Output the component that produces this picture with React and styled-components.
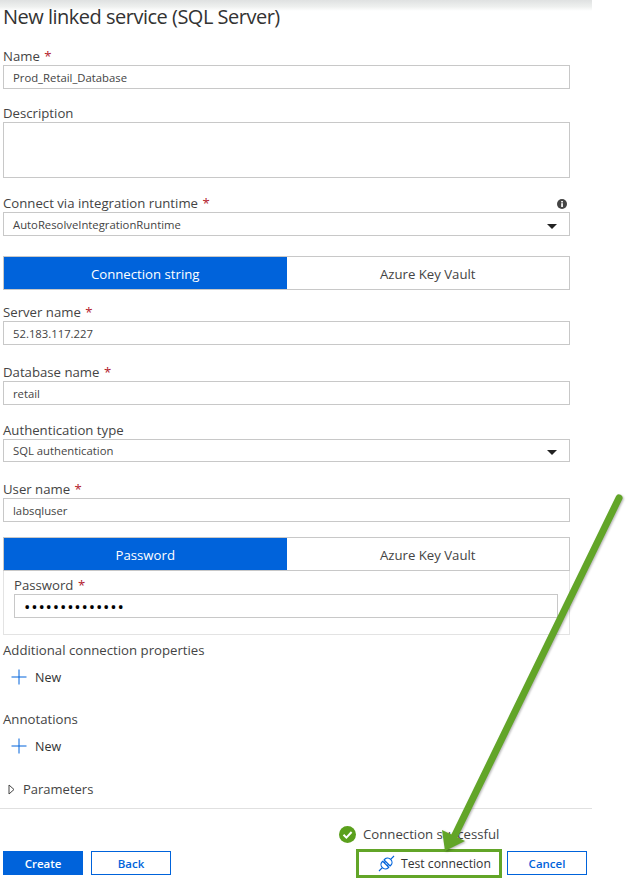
import React from 'react';
import styled, { createGlobalStyle } from 'styled-components';

const Global = createGlobalStyle`
  html, body { margin: 0; padding: 0; background: #fff; }
  * { box-sizing: border-box; }
`;
const Page = styled.div`
  position: relative; width: 637px; height: 881px; overflow: hidden;
  font-family: "Open Sans", "Liberation Sans", sans-serif; color: #444;
`;
const Panel = styled.div`
  width: 592px; height: 881px; padding: 0 22px 0 3px;
  background: linear-gradient(#dfe1e1, #eef0ef 60%, #fff) no-repeat top / 100% 11px;
`;
const Title = styled.h1`
  margin: 0; height: 48px; padding-top: 3px; font-size: 20px; letter-spacing: -0.5px; line-height: 28px; font-weight: 400; color: #333;
`;
const Field = styled.div` margin-top: ${p => p.$gap || 0}px; `;
const Label = styled.label`
  display: block; height: 17px; font-size: 13.2px; line-height: 17px; color: #444; white-space: nowrap;
`;
const Req = styled.span` color: #b3202c; margin-left: 1px; `;
const Input = styled.div`
  height: ${p => p.$h || 24}px; border: 1px solid #c8c8c8; padding: 0 9px; font-size: 11.3px; line-height: 23px; color: #444; background: #fff;
`;
const Select = styled(Input)`
  display: flex; justify-content: space-between; align-items: center; padding-right: 12px;
`;
const Caret = styled.span`
  width: 0; height: 0; border: 5px solid transparent; border-top: 5px solid #222; border-bottom: 0; margin-top: 4px;
`;
const LabelRow = styled.div` display: flex; justify-content: space-between; align-items: center; padding-right: 3px; `;
const Tabs = styled.div`
  display: grid; grid-template-columns: 1fr 1fr; height: 34px; margin-top: ${p => p.$gap}px; border: 1px solid #c8c8c8;
`;
const Tab = styled.div`
  display: flex; align-items: center; justify-content: center; font-size: 13.2px; padding-top: 1px;
  background: ${p => p.$active ? '#0063db' : '#fff'}; color: ${p => p.$active ? '#fff' : '#444'};
`;
const TabPanel = styled.div`
  height: 64px; border: 1px solid #e3e3e3; border-top: 0; padding: 6px 11px 0 10px;
`;
const Dots = styled(Input)` font-size: 17px; letter-spacing: 0.8px; color: #000; padding-left: 9px; `;
const AddRow = styled.div`
  display: flex; align-items: center; gap: 8px; height: 20px; margin-top: ${p => p.$gap}px; padding-left: 8px; font-size: 12.5px; color: #333;
`;
const Expander = styled.div`
  display: flex; align-items: center; gap: 8px; height: 18px; margin-top: ${p => p.$gap}px; padding-left: 5px; font-size: 13px;
`;
const Divider = styled.div` height: 1px; background: #e0e0e0; margin: 10px -22px 0 -3px; `;
const Status = styled.div`
  display: flex; align-items: center; gap: 7px; height: 18px; margin: 16px 0 0 336px; font-size: 13.2px;
`;
const Footer = styled.div` display: flex; align-items: flex-start; height: 29px; margin: 6px -17px 0 0; `;
const Btn = styled.div`
  width: 80px; height: 24px; display: flex; align-items: center; justify-content: center; font-size: 11.5px; font-weight: 600; margin-top: 2px;
  background: ${p => p.$primary ? '#0063db' : '#fff'}; color: ${p => p.$primary ? '#fff' : '#0063db'};
  border: 1px solid #0063db; margin-left: ${p => p.$ml || 0}px;
`;
const TestBtn = styled.div`
  width: 146px; height: 29px; display: flex; align-items: center; gap: 6px; padding-left: 19px; margin: 0 5px 0 185px;
  border: 3px solid #62a528; font-size: 12.2px; color: #333; white-space: nowrap; background: #fff;
`;
const Overlay = styled.svg` position: absolute; left: 0; top: 0; pointer-events: none; filter: drop-shadow(1px 1px 1px rgba(0,0,0,.3)); `;

const Plus = () => (
  <svg width="16" height="16" viewBox="0 0 16 16"><path d="M8 0.5V15.5M0.5 8H15.5" stroke="#0063db" strokeWidth="1" fill="none"/></svg>
);

const Req1 = () => <Req>*</Req>;

export default function App() {
  return (
    <Page>
      <Global />
      <Panel>
        <Title>New linked service (SQL Server)</Title>
        <Field>
          <Label>Name <Req1 /></Label>
          <Input>Prod_Retail_Database</Input>
        </Field>
        <Field $gap={16}>
          <Label>Description</Label>
          <Input $h={56} />
        </Field>
        <Field $gap={17}>
          <LabelRow>
            <Label>Connect via integration runtime <Req1 /></Label>
            <svg width="10" height="10" viewBox="0 0 10 10"><circle cx="5" cy="5" r="5" fill="#444"/><rect x="4.2" y="4.2" width="1.7" height="3.8" fill="#fff"/><rect x="4.2" y="2" width="1.7" height="1.5" fill="#fff"/></svg>
          </LabelRow>
          <Select>AutoResolveIntegrationRuntime<Caret /></Select>
        </Field>
        <Tabs $gap={20}>
          <Tab $active>Connection string</Tab>
          <Tab>Azure Key Vault</Tab>
        </Tabs>
        <Field $gap={14}>
          <Label>Server name <Req1 /></Label>
          <Input>52.183.117.227</Input>
        </Field>
        <Field $gap={19}>
          <Label>Database name <Req1 /></Label>
          <Input>retail</Input>
        </Field>
        <Field $gap={17}>
          <Label>Authentication type</Label>
          <Select $h={23}>SQL authentication<Caret /></Select>
        </Field>
        <Field $gap={19}>
          <Label>User name <Req1 /></Label>
          <Input>labsqluser</Input>
        </Field>
        <Tabs $gap={15}>
          <Tab $active>Password</Tab>
          <Tab>Azure Key Vault</Tab>
        </Tabs>
        <TabPanel>
          <Label>Password <Req1 /></Label>
          <Dots>••••••••••••••</Dots>
        </TabPanel>
        <Field $gap={7}>
          <Label>Additional connection properties</Label>
        </Field>
        <AddRow $gap={8}><Plus />New</AddRow>
        <Field $gap={24}>
          <Label>Annotations</Label>
        </Field>
        <AddRow $gap={8}><Plus />New</AddRow>
        <Expander $gap={24}>
          <svg width="7" height="11" viewBox="0 0 7 11"><path d="M1 1L6 5.5L1 10Z" stroke="#444" fill="none"/></svg>
          Parameters
        </Expander>
        <Divider />
        <Status>
          <svg width="17" height="17" viewBox="0 0 17 17"><circle cx="8.5" cy="8.5" r="8.5" fill="#5ba01d"/><path d="M4.5 8.8L7.4 11.6L12.6 6" stroke="#fff" strokeWidth="2" fill="none"/></svg>
          Connection successful
        </Status>
        <Footer>
          <Btn $primary>Create</Btn>
          <Btn $ml={8}>Back</Btn>
          <TestBtn>
            <svg width="17" height="17" viewBox="0 0 16 16" fill="none" stroke="#0063db" strokeWidth="1.1">
              <g transform="rotate(45 8 8)">
                <path d="M8 2.5V-2M4 7.2V6A4 3.5 0 0 1 12 6V7.2ZM4 9H12V10A4 3.5 0 0 1 4 10ZM8 13.5V18M6 7.2V9M10 7.2V9"/>
              </g>
            </svg>
            Test connection
          </TestBtn>
          <Btn>Cancel</Btn>
        </Footer>
      </Panel>
      <Overlay width="637" height="881" viewBox="0 0 637 881">
        <path d="M619 498L455 835" stroke="#62a528" strokeWidth="7" strokeLinecap="round" fill="none"/>
        <path d="M445 851L442 830L465 841Z" fill="#62a528"/>
      </Overlay>
    </Page>
  );
}
